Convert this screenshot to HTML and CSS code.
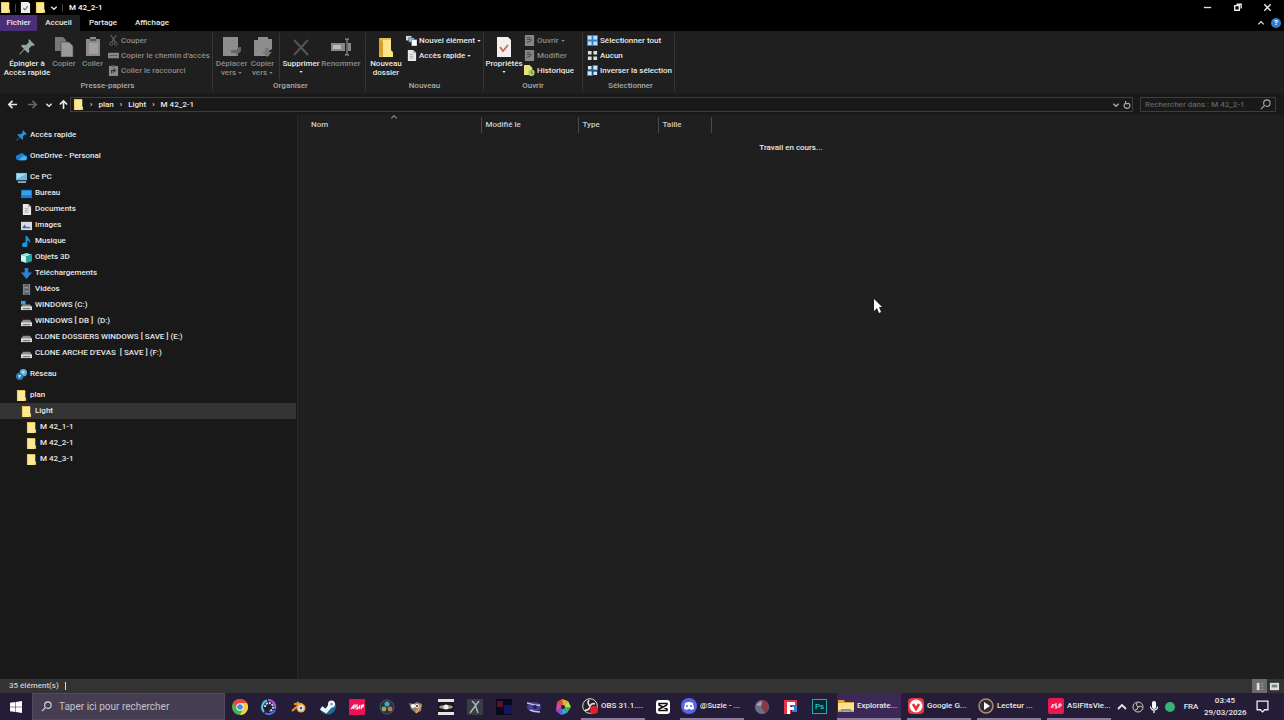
FILE: index.html
```
<!DOCTYPE html>
<html lang="fr">
<head>
  <meta charset="UTF-8" />
  <meta name="viewport" content="width=device-width, initial-scale=1.0" />
  <title>M 42_2-1</title>
  <link rel="stylesheet" href="styles.css">
</head>
<body>
  <!-- Iconos compartidos -->
  <svg class="sprite" aria-hidden="true">
    <symbol id="i-folder" viewBox="0 0 12 12"><path fill="#e8c64f" d="M1 0h9v12H1z"/><path fill="#fbe895" d="M2 1h8v7l1 1v3H2z"/><path fill="#e2b93c" d="M10 9l1 3H9z"/></symbol>
    <symbol id="i-check" viewBox="0 0 12 12"><path fill="#eee" d="M1 0h8l2 2v10H1z"/><path fill="none" stroke="#777" stroke-width="1.3" d="M3.5 6.5l2 2 3-4"/></symbol>
    <symbol id="i-pin" viewBox="0 0 16 16"><path fill="currentColor" d="M10 0l6 6-2 1-1-.5-3 3 .3 3.5L9 14 5.500 10.700 1 15.500.3 15 5 10 2 7l1.200-1.300L7 6l3-3-.7-1.500z"/></symbol>
    <symbol id="i-copy" viewBox="0 0 18 20"><path fill="#777" d="M0 0h8l3 3v11H0z"/><path fill="#9a9a9a" stroke="#4c4c4c" stroke-width=".7" d="M6 5h8l4 4v11H6z"/></symbol>
    <symbol id="i-paste" viewBox="0 0 16 20"><path fill="#8b8b8b" d="M1 2h4V0h6v2h4v17H1z"/><path fill="#555" d="M5 2h6v2H5z"/><path fill="#a0a0a0" d="M4 6h9v11H4z"/></symbol>
    <symbol id="i-cut" viewBox="0 0 12 12"><path fill="none" stroke="#666" stroke-width="1.200" d="M3 0l5 8M9 0L4 8"/><circle cx="3.500" cy="9.500" r="1.700" fill="none" stroke="#666"/><circle cx="8.500" cy="9.500" r="1.700" fill="none" stroke="#666"/></symbol>
    <symbol id="i-path" viewBox="0 0 12 12"><path fill="#888" d="M0 3h12v6H0z"/><path stroke="#444" d="M2 6h2M5 6h2M8 6h2"/></symbol>
    <symbol id="i-link" viewBox="0 0 12 12"><path fill="#888" d="M1 1h10v11H1z"/><path fill="#555" d="M4 0h4v2H4z"/><path fill="none" stroke="#333" stroke-width="1.300" d="M4 9V6h3M6 4l2 2-2 2"/></symbol>
    <symbol id="i-move" viewBox="0 0 18 20"><path fill="#8d8d8d" d="M0 0h15v19H0z"/><path fill="#666" d="M16 10h2v4l-5 5v-3H8v-3h5z"/></symbol>
    <symbol id="i-copyto" viewBox="0 0 18 20"><path fill="#8d8d8d" d="M4 0h10v2h4v10l-3 2v5H0V3h4z"/><path fill="#777" d="M11 11h4v4h3l-5 5-5-5h3z"/></symbol>
    <symbol id="i-delete" viewBox="0 0 18 20"><path fill="none" stroke="#555" stroke-width="2" d="M2 3l14 15M16 3L2 18"/></symbol>
    <symbol id="i-rename" viewBox="0 0 20 20"><path fill="#888" d="M0 6h14v8H0z"/><path fill="#bbb" d="M2 8h8v4H2z"/><path fill="none" stroke="#888" stroke-width="1.300" d="M16 3v14M14 2h1l1 1 1-1h1M14 18h1l1-1 1 1h1"/><path fill="#888" d="M17 6h3v8h-3z"/></symbol>
    <symbol id="i-newfolder" viewBox="0 0 18 20"><path fill="#e9c14d" d="M2 1h12v12l2 2v5H2z"/><path fill="#ffe389" d="M5 3h9v11l2 2v4H6z"/><path fill="#d3a127" d="M2 1l4 3v16l-4-2z"/></symbol>
    <symbol id="i-newitem" viewBox="0 0 12 12"><path fill="#cfd8dd" d="M0 1h6v5H0z"/><path fill="#8fc1e0" stroke="#333" stroke-width=".5" d="M3 3h6v5H3z"/><path fill="#fff" stroke="#555" stroke-width=".5" d="M6 5h6v7H6z"/></symbol>
    <symbol id="i-doc" viewBox="0 0 12 12"><path fill="#e8e8e8" d="M2 0h6l3 3v9H2z"/><path fill="none" stroke="#999" stroke-width=".8" d="M8 0v3h3M4 5h4M4 7h4M4 9h4"/></symbol>
    <symbol id="i-props" viewBox="0 0 18 20"><path fill="#f3f0ef" d="M2 0h11l3 3v17H2z"/><path fill="none" stroke="#d0674f" stroke-width="1.800" d="M5 10l3 4 5-6"/></symbol>
    <symbol id="i-open" viewBox="0 0 12 12"><path fill="#858585" d="M1 0h10v12H1z"/><path fill="none" stroke="#444" d="M3 3h4M3 5h4M3 8l4-1 1-3"/></symbol>
    <symbol id="i-history" viewBox="0 0 12 12"><path fill="#e6e27a" d="M0 0h6l3 3v8H0z"/><circle cx="8" cy="8.500" r="3.500" fill="#b9cf66"/><path fill="none" stroke="#4f7a38" d="M8 6v3h2"/></symbol>
    <symbol id="i-selall" viewBox="0 0 12 12"><path fill="#2d83c9" d="M0 0h12v12H0z"/><path fill="#bfe2fb" d="M1 1h4v4H1zM7 1h4v4H7zM1 7h4v4H1zM7 7h4v4H7z"/></symbol>
    <symbol id="i-selnone" viewBox="0 0 12 12"><path fill="#ddd" d="M1 1h4v4H1zM7 1h4v4H7zM1 7h4v4H1zM7 7h4v4H7z"/></symbol>
    <symbol id="i-selinv" viewBox="0 0 12 12"><path fill="#2d83c9" d="M6 0h6v6H6zM0 6h6v6H0z"/><path fill="#cfe8fa" d="M1 1h4v4H1zM7 1h4v4H7zM1 7h4v4H1zM7 7h4v4H7z"/></symbol>
    <symbol id="i-left" viewBox="0 0 12 12"><path fill="none" stroke="currentColor" stroke-width="1.800" d="M11 6H2M6 2L2 6l4 4"/></symbol>
    <symbol id="i-down" viewBox="0 0 12 12"><path fill="none" stroke="currentColor" stroke-width="2" d="M2 4l4 4 4-4"/></symbol>
    <symbol id="i-up" viewBox="0 0 12 12"><path fill="none" stroke="currentColor" stroke-width="1.800" d="M2 8l4-4 4 4"/></symbol>
    <symbol id="i-caret" viewBox="0 0 12 12"><path fill="currentColor" d="M1 3h10L6 9z"/></symbol>
    <symbol id="i-search" viewBox="0 0 12 12"><circle cx="7.500" cy="4.500" r="3.500" fill="none" stroke="currentColor" stroke-width="1.200"/><path stroke="currentColor" stroke-width="1.200" d="M5 7L1 11"/></symbol>
    <symbol id="i-cloud" viewBox="0 0 12 12"><path fill="#1683d8" d="M3 10a3 3 0 0 1 0-6 4 4 0 0 1 7 1 2.500 2.500 0 0 1 0 5z"/><path fill="#4bb3f2" d="M3 10l5-4.500 3 .5a2.500 2.500 0 0 1-1 4z"/></symbol>
    <symbol id="i-pc" viewBox="0 0 12 12"><path fill="#6eb7e0" d="M0 1h12v8H0z"/><path fill="#a6dcf6" d="M1 2h10L1 8z"/><path fill="#9aa8b0" d="M2 10h9v2H2z"/></symbol>
    <symbol id="i-desk" viewBox="0 0 12 12"><path fill="#1479cf" d="M0 2h12v9H0z"/><path fill="#32a0ee" d="M1 3h10v5H1z"/></symbol>
    <symbol id="i-img" viewBox="0 0 12 12"><path fill="#d5dae6" d="M0 2h12v9H0z"/><path fill="#4a6a91" d="M1 9l3-4 2 3 2-1 3 2z"/></symbol>
    <symbol id="i-music" viewBox="0 0 12 12"><path fill="#1b96dd" d="M5 0h2c0 3 4 3 3 8-1-2-1-3-3-3v4a3 3 0 1 1-2-2z"/></symbol>
    <symbol id="i-cube" viewBox="0 0 12 12"><path fill="#8ff0ea" d="M0 3l6-2 6 2-6 2z"/><path fill="#c8f6f2" d="M0 3l6 2v7l-6-2z"/><path fill="#21a9a6" d="M12 3L6 5v7l6-2z"/></symbol>
    <symbol id="i-dl" viewBox="0 0 12 12"><path fill="#2c83d6" d="M4 0h4v5h4l-6 7-6-7h4z"/></symbol>
    <symbol id="i-video" viewBox="0 0 12 12"><path fill="#5d6270" d="M2 0h8v12H2z"/><path stroke="#b8bdc8" stroke-dasharray="1 1" d="M3 0v12M9 0v12"/><path stroke="#aaa" d="M4 4h4M4 8h4"/></symbol>
    <symbol id="i-drive" viewBox="0 0 12 12"><path fill="#8d8d8d" d="M2 4h8l2 4H0z"/><path fill="#ddd" d="M0 7h12v4H0z"/><path stroke="#555" d="M2 9.500h8"/></symbol>
    <symbol id="i-sys" viewBox="0 0 12 12"><path fill="#28a8ea" d="M0 1h5v4H0z"/><path fill="#8d8d8d" d="M2 5h8l2 3H0z"/><path fill="#ddd" d="M0 7h12v4H0z"/><path stroke="#555" d="M2 9.500h8"/></symbol>
    <symbol id="i-net" viewBox="0 0 12 12"><circle cx="8" cy="4" r="4" fill="#5eb0e0"/><circle cx="4" cy="8" r="4" fill="#2c7cb8"/><path fill="#b4e0f7" d="M6 2l4 1-3 3zM2 7l4-1-2 4z"/></symbol>
  </svg>

  <header class="titlebar">
    <svg class="icon"><use href="#i-folder"/></svg>
    <span class="bar"></span>
    <svg class="icon"><use href="#i-check"/></svg>
    <svg class="icon"><use href="#i-folder"/></svg>
    <svg class="icon small"><use href="#i-down"/></svg>
    <span class="bar"></span>
    <h1>M 42_2-1</h1>
    <div class="window-buttons">
      <button aria-label="Réduire"><svg class="icon" viewBox="0 0 12 12"><path stroke="#ddd" stroke-width="1.500" d="M2 6h8"/></svg></button>
      <button aria-label="Restaurer"><svg class="icon" viewBox="0 0 12 12"><path fill="none" stroke="#eee" stroke-width="1.500" d="M3 4h5v5H3zM5 2.500h5V7"/></svg></button>
      <button aria-label="Fermer"><svg class="icon" viewBox="0 0 12 12"><path stroke="#eee" stroke-width="1.500" d="M2.500 2.500l7 7M9.500 2.500l-7 7"/></svg></button>
    </div>
  </header>

  <nav class="tabs">
    <button class="tab file">Fichier</button>
    <button class="tab active">Accueil</button>
    <button class="tab">Partage</button>
    <button class="tab last">Affichage</button>
    <div class="tabs-end">
      <button aria-label="Réduire le ruban"><svg class="icon small"><use href="#i-up"/></svg></button>
      <button class="help" aria-label="Aide">?</button>
    </div>
  </nav>

  <section class="ribbon">
    <div class="group clipboard">
      <div class="tools">
        <button class="big wide"><svg class="big-icon pin"><use href="#i-pin"/></svg>Épingler à<br>Accès rapide</button>
        <button class="big narrow off"><svg class="big-icon"><use href="#i-copy"/></svg>Copier</button>
        <button class="big off"><svg class="big-icon"><use href="#i-paste"/></svg>Coller</button>
        <div class="list">
          <button class="off"><svg class="icon"><use href="#i-cut"/></svg>Couper</button>
          <button class="off"><svg class="icon"><use href="#i-path"/></svg>Copier le chemin d'accès</button>
          <button class="off"><svg class="icon"><use href="#i-link"/></svg>Coller le raccourci</button>
        </div>
      </div>
      <p>Presse-papiers</p>
    </div>
    <div class="group organize">
      <div class="tools">
        <button class="big off"><svg class="big-icon"><use href="#i-move"/></svg>Déplacer<span>vers <svg class="caret"><use href="#i-caret"/></svg></span></button>
        <button class="big off"><svg class="big-icon"><use href="#i-copyto"/></svg>Copier<span>vers <svg class="caret"><use href="#i-caret"/></svg></span></button>
        <span class="separator"></span>
        <button class="big medium"><svg class="big-icon"><use href="#i-delete"/></svg>Supprimer<svg class="caret"><use href="#i-caret"/></svg></button>
        <button class="big medium off"><svg class="big-icon"><use href="#i-rename"/></svg>Renommer</button>
      </div>
      <p>Organiser</p>
    </div>
    <div class="group new">
      <div class="tools">
        <button class="big medium"><svg class="big-icon"><use href="#i-newfolder"/></svg>Nouveau<br>dossier</button>
        <div class="list">
          <button><svg class="icon"><use href="#i-newitem"/></svg>Nouvel élément<svg class="caret"><use href="#i-caret"/></svg></button>
          <button><svg class="icon"><use href="#i-doc"/></svg>Accès rapide<svg class="caret"><use href="#i-caret"/></svg></button>
        </div>
      </div>
      <p>Nouveau</p>
    </div>
    <div class="group open">
      <div class="tools">
        <button class="big medium"><svg class="big-icon"><use href="#i-props"/></svg>Propriétés<svg class="caret"><use href="#i-caret"/></svg></button>
        <div class="list">
          <button class="off"><svg class="icon"><use href="#i-open"/></svg>Ouvrir<svg class="caret"><use href="#i-caret"/></svg></button>
          <button class="off"><svg class="icon"><use href="#i-open"/></svg>Modifier</button>
          <button><svg class="icon"><use href="#i-history"/></svg>Historique</button>
        </div>
      </div>
      <p>Ouvrir</p>
    </div>
    <div class="group select">
      <div class="tools">
        <div class="list">
          <button><svg class="icon"><use href="#i-selall"/></svg>Sélectionner tout</button>
          <button><svg class="icon"><use href="#i-selnone"/></svg>Aucun</button>
          <button><svg class="icon"><use href="#i-selinv"/></svg>Inverser la sélection</button>
        </div>
      </div>
      <p>Sélectionner</p>
    </div>
  </section>

  <div class="location">
    <button class="nav" aria-label="Précédent"><svg class="icon"><use href="#i-left"/></svg></button>
    <button class="nav dim" aria-label="Suivant"><svg class="icon flip"><use href="#i-left"/></svg></button>
    <button class="nav recent" aria-label="Récents"><svg class="icon small"><use href="#i-down"/></svg></button>
    <button class="nav recent" aria-label="Dossier parent"><svg class="icon turn"><use href="#i-left"/></svg></button>
    <div class="address">
      <svg class="icon"><use href="#i-folder"/></svg>
      <span>›</span><a href="#plan">plan</a>
      <span>›</span><a href="#light">Light</a>
      <span>›</span><a href="#m42">M 42_2-1</a>
      <div class="address-end">
        <svg class="icon small"><use href="#i-down"/></svg>
        <svg class="icon small" viewBox="0 0 12 12"><path fill="none" stroke="currentColor" stroke-width="1.800" d="M8 3a4.300 4.300 0 1 1-4 0M4 0v4h4"/></svg>
      </div>
    </div>
    <label class="search">
      <input type="search" placeholder="Rechercher dans : M 42_2-1" aria-label="Rechercher" />
      <svg class="icon"><use href="#i-search"/></svg>
    </label>
  </div>

  <main class="explorer">
    <aside class="tree">
      <ul>
        <li><a href="#acces"><svg class="icon pin-blue"><use href="#i-pin"/></svg>Accès rapide</a></li>
      </ul>
      <ul>
        <li><a href="#onedrive"><svg class="icon"><use href="#i-cloud"/></svg>OneDrive - Personal</a></li>
      </ul>
      <ul>
        <li><a href="#pc"><svg class="icon"><use href="#i-pc"/></svg>Ce PC</a></li>
        <li><a class="level-1" href="#bureau"><svg class="icon"><use href="#i-desk"/></svg>Bureau</a></li>
        <li><a class="level-1" href="#documents"><svg class="icon"><use href="#i-doc"/></svg>Documents</a></li>
        <li><a class="level-1" href="#images"><svg class="icon"><use href="#i-img"/></svg>Images</a></li>
        <li><a class="level-1" href="#musique"><svg class="icon"><use href="#i-music"/></svg>Musique</a></li>
        <li><a class="level-1" href="#objets"><svg class="icon"><use href="#i-cube"/></svg>Objets 3D</a></li>
        <li><a class="level-1" href="#dl"><svg class="icon"><use href="#i-dl"/></svg>Téléchargements</a></li>
        <li><a class="level-1" href="#videos"><svg class="icon"><use href="#i-video"/></svg>Vidéos</a></li>
        <li><a class="level-1" href="#c"><svg class="icon"><use href="#i-sys"/></svg>WINDOWS (C:)</a></li>
        <li><a class="level-1" href="#d"><svg class="icon"><use href="#i-drive"/></svg>WINDOWS [ DB ]&nbsp; (D:)</a></li>
        <li><a class="level-1" href="#e"><svg class="icon"><use href="#i-drive"/></svg>CLONE DOSSIERS WINDOWS [ SAVE ] (E:)</a></li>
        <li><a class="level-1" href="#f"><svg class="icon"><use href="#i-drive"/></svg>CLONE ARCHE D'EVAS&nbsp; [ SAVE ] (F:)</a></li>
      </ul>
      <ul>
        <li><a href="#reseau"><svg class="icon"><use href="#i-net"/></svg>Réseau</a></li>
      </ul>
      <ul>
        <li><a href="#plan"><svg class="icon"><use href="#i-folder"/></svg>plan</a></li>
        <li><a class="level-1 selected" href="#light"><svg class="icon"><use href="#i-folder"/></svg>Light</a></li>
        <li><a class="level-2" href="#m1"><svg class="icon"><use href="#i-folder"/></svg>M 42_1-1</a></li>
        <li><a class="level-2" href="#m2"><svg class="icon"><use href="#i-folder"/></svg>M 42_2-1</a></li>
        <li><a class="level-2" href="#m3"><svg class="icon"><use href="#i-folder"/></svg>M 42_3-1</a></li>
      </ul>
    </aside>
    <section class="files">
      <table>
        <thead>
          <tr>
            <th class="col-name">Nom<svg class="icon small sort"><use href="#i-up"/></svg></th>
            <th class="col-date">Modifié le</th>
            <th class="col-type">Type</th>
            <th class="col-size">Taille</th>
          </tr>
        </thead>
      </table>
      <p class="working">Travail en cours...</p>
    </section>
  </main>

  <div class="status">
    <span>35 élément(s)</span><i></i>
    <div class="views">
      <button class="on" aria-label="Détails"><svg class="icon" viewBox="0 0 12 12"><path fill="#ddd" d="M3 2h3v8H3z"/><path stroke="#aaa" d="M8 3h2M8 6h2M8 9h2"/></svg></button>
      <button aria-label="Grandes icônes"><svg class="icon" viewBox="0 0 12 12"><path fill="#ddd" d="M1 2h10v8H1z"/><path fill="#688" d="M3 4h6v3H3z"/></svg></button>
    </div>
  </div>

  <footer class="taskbar">
    <button class="start" aria-label="Démarrer"><svg class="icon" viewBox="0 0 12 12"><path fill="#fff" d="M0 1.700L5.500 1v4.700H0zM6 .900L12 0v5.700H6zM0 6.200h5.500V11L0 10.300zM6 6.200h6V12L6 11.100z"/></svg></button>
    <label class="task-search">
      <svg class="icon"><use href="#i-search"/></svg>
      <input type="text" placeholder="Taper ici pour rechercher" aria-label="Rechercher dans Windows" />
    </label>
    <div class="pinned">
      <button aria-label="Chrome"><svg viewBox="0 0 16 16"><circle cx="8" cy="8" r="8" fill="#4caf50"/><path fill="#e5483a" d="M1 4a8 8 0 0 1 14 0H8L5 9z"/><path fill="#f8cd3d" d="M15 4a8 8 0 0 1-7 12l4-8-4-4z"/><circle cx="8" cy="8" r="3.700" fill="#fff"/><circle cx="8" cy="8" r="2.800" fill="#4289ea"/></svg></button>
      <button aria-label="Studio"><svg viewBox="0 0 16 16" fill="none" stroke-width="2"><path stroke="#55c9e7" d="M3 13A7 7 0 0 1 6 1.500"/><path stroke="#b25bcc" d="M7 1a7 7 0 0 1 7 9"/><path stroke="#4a6fe3" d="M14 11A7 7 0 0 1 4 14"/><path stroke="#b5e4ee" stroke-dasharray="2 1" d="M4 8a4 4 0 1 1 4 4"/></svg></button>
      <button aria-label="Blender"><svg viewBox="0 0 16 16"><path fill="none" stroke="#ef922d" stroke-width="2" d="M1 12l8-7H3M6 3l5 4"/><circle cx="10" cy="9" r="4.500" fill="#f3a24a"/><circle cx="10" cy="9" r="2.700" fill="#fff"/><circle cx="10" cy="9" r="1.500" fill="#345f99"/></svg></button>
      <button aria-label="Steam"><svg viewBox="0 0 16 16"><path fill="#1d6c9c" d="M0 9a8 8 0 0 0 15 2 8 8 0 0 0 0-7z"/><path stroke="#f4f8fc" stroke-width="4" d="M1 9l5 3 5-6"/><circle cx="11.500" cy="5" r="3.500" fill="#f4f8fc"/><circle cx="11.500" cy="5" r="1.500" fill="#88a9c3"/></svg></button>
      <button aria-label="ASI"><svg viewBox="0 0 16 16"><rect width="16" height="16" rx="1" fill="#ee1154"/><path fill="none" stroke="#fff" stroke-width="1.200" d="M2 10l3-4v4M3 9h2M9 6H7L6.500 8H9L8.500 10H6.500M11 6l-1 4M12 10l1-4h1.500L14 8h-2"/></svg></button>
      <button aria-label="Resolve"><svg viewBox="0 0 16 16"><circle cx="8" cy="8" r="7" fill="#26323e" stroke="#4a5963"/><circle cx="8" cy="5" r="2.500" fill="#40a7cc"/><circle cx="5" cy="10" r="2.400" fill="#8fae58"/><circle cx="11" cy="10" r="2.400" fill="#c27a46"/></svg></button>
      <button aria-label="GIMP"><svg viewBox="0 0 16 16"><path fill="#8b8378" d="M1 4l4 1 4-2 5 2-1 7-5 2-5-4z"/><circle cx="5" cy="7" r="2" fill="#fff"/><circle cx="9" cy="7" r="2" fill="#fff"/><circle cx="9" cy="7" r="1" fill="#222"/><path stroke="#e4a14c" stroke-width="2" d="M8 14l5-8"/></svg></button>
      <button aria-label="Siril"><svg viewBox="0 0 16 16"><path fill="#e4e4e4" d="M0 0h16v3H0zM0 13h16v3H0z"/><path fill="#181818" d="M0 3h16v10H0z"/><ellipse cx="8" cy="8" rx="7" ry="2" fill="#999"/><circle cx="8" cy="8" r="2.500" fill="#eee"/></svg></button>
      <button aria-label="Lunette"><svg viewBox="0 0 16 16"><path fill="#393d42" d="M0 0h16v16H0z"/><path fill="none" stroke="#a7b4b7" stroke-width="1.500" d="M3 14L12 2M5 2l3 3 3 9"/></svg></button>
      <button aria-label="Capture"><svg viewBox="0 0 16 16"><path fill="#08081d" d="M0 0h16v16H0z"/><path fill="#5d102b" d="M1 2h6v6H1z"/><path fill="#151660" d="M8 6h8v9H8z"/></svg></button>
      <button aria-label="Stellarium"><svg viewBox="0 0 16 16"><ellipse cx="8" cy="8" rx="7" ry="5" fill="#4c3f92"/><path fill="none" stroke="#bfc2ef" stroke-width="1.500" d="M1 4c4 0 5 3 13 2M4 11c4 2 7 2 10 2"/><circle cx="9" cy="8" r="2" fill="#24214f"/></svg></button>
      <button aria-label="Photos"><svg viewBox="0 0 16 16"><path fill="#e94d38" d="M8 8L2 3l5-3z"/><path fill="#f4ad36" d="M8 8L7 0l6 2z"/><path fill="#bade43" d="M8 8l5-6 3 6z"/><path fill="#39b85f" d="M8 8h8l-4 6z"/><path fill="#33a6e2" d="M8 8l4 6-6 2z"/><path fill="#7455d5" d="M8 8l-2 8-5-4z"/><path fill="#de45a0" d="M8 8l-7 4 1-9z"/><circle cx="8" cy="8" r="2" fill="#27203a"/></svg></button>
    </div>
    <button class="app"><svg viewBox="0 0 16 16"><circle cx="8" cy="8" r="7.300" fill="#222" stroke="#ddd"/><path fill="none" stroke="#ddd" stroke-width="1.700" d="M7 2a4 4 0 0 0 1 6 4 4 0 0 1-5 4M8 8a4 4 0 0 1 5-2"/><circle cx="12" cy="12" r="4" fill="#e51f2b"/></svg><span>OBS 31.1....</span></button>
    <button class="solo" aria-label="CapCut"><svg viewBox="0 0 16 16"><rect x="1" y="1" width="14" height="14" rx="3" fill="#fff"/><path fill="none" stroke="#111" stroke-width="1.500" d="M12 6V4.500H4V6l8 4v1.500H4V10l8-4"/></svg></button>
    <button class="app"><svg viewBox="0 0 16 16"><circle cx="8" cy="8" r="8" fill="#5865e9"/><path fill="#fff" d="M4 5l3-1h2l3 1 1 6-3 1-1-1H7l-1 1-3-1z"/><circle cx="6" cy="8" r="1" fill="#5865e9"/><circle cx="10" cy="8" r="1" fill="#5865e9"/></svg><span>@Suzie - ...</span></button>
    <button class="solo" aria-label="Sphère"><svg viewBox="0 0 16 16"><circle cx="8" cy="8" r="7" fill="#69708a"/><path fill="#8d3848" d="M8 1a7 7 0 0 1 3 13L7 8z"/><path fill="#a6aab5" d="M2 6l6-4-1 5z"/></svg></button>
    <button class="solo" aria-label="Fusion"><svg viewBox="0 0 16 16"><path fill="#e3344b" d="M1 1h13v6H8v8H1z"/><path fill="#3183d5" d="M9 7h5v6H9z"/><path fill="#fff" d="M4 3h8v3H7v2h4v3H7v4H4z"/></svg></button>
    <button class="solo ps" aria-label="Photoshop"><span>Ps</span></button>
    <button class="app current"><svg viewBox="0 0 16 16"><path fill="#dba93e" d="M0 2h6l1 2h9v10H0z"/><path fill="#ffe08a" d="M0 5h16v7H0z"/><path fill="#7e9aa0" d="M3 11h10v3h-2v-1H5v1H3z"/></svg><span>Explorate...</span></button>
    <button class="app"><svg viewBox="0 0 16 16"><rect width="16" height="16" rx="4" fill="#e93842"/><circle cx="8" cy="8" r="6.500" fill="#fff"/><path fill="none" stroke="#e32e3b" stroke-width="2.500" d="M5 6l3 5 3-5"/></svg><span>Google G...</span></button>
    <button class="app"><svg viewBox="0 0 16 16"><circle cx="8" cy="8" r="7" fill="#332c36" stroke="#ac8d6e" stroke-width="1.500"/><path fill="#fff" d="M6 4l6 4-6 4z"/></svg><span>Lecteur ...</span></button>
    <button class="app"><svg viewBox="0 0 16 16"><rect width="16" height="16" rx="2" fill="#e8174f"/><path fill="none" stroke="#fff" d="M3 10l2-4v4M9 6H7v2h2v2H7M11 10V6h2v2h-2"/></svg><span>ASIFitsVie...</span></button>
    <div class="tray">
      <button aria-label="Icônes cachées"><svg class="icon"><use href="#i-up"/></svg></button>
      <button aria-label="OBS"><svg class="icon" viewBox="0 0 12 12"><circle cx="6" cy="6" r="5" fill="#222" stroke="#ccc"/><path fill="none" stroke="#ccc" d="M5 2a3 3 0 0 0 1 4 3 3 0 0 1-3 3M6 6a3 3 0 0 1 4 0"/></svg></button>
      <button aria-label="Micro"><svg class="icon" viewBox="0 0 12 12"><rect x="4" y="0" width="4" height="8" rx="2" fill="#fff"/><path fill="none" stroke="#fff" stroke-width="1.200" d="M2.500 5.500a3.500 3.500 0 0 0 7 0M6 9v3"/></svg></button>
      <button aria-label="En ligne"><svg class="icon" viewBox="0 0 12 12"><circle cx="6" cy="6" r="5" fill="#35b374"/></svg></button>
    </div>
    <button class="lang">FRA</button>
    <div class="clock">03:45<br>29/03/2026</div>
    <button class="notify" aria-label="Notifications"><svg viewBox="0 0 12 12"><path fill="none" stroke="#eee" stroke-width="1.200" d="M1 1h10v8H8l-2 2-2-2H1z"/></svg></button>
  </footer>

  <svg class="cursor" viewBox="0 0 8 14" aria-hidden="true"><path fill="#fff" d="M0 0l8 8H5l2 5-2 1-2-5-3 3z"/></svg>
</body>
</html>
```

FILE: styles.css
```
* {
  box-sizing: border-box;
}
body {
  margin: 0;
  min-height: 100vh;
  display: flex;
  flex-direction: column;
  background: #1f1f1f;
  color: #e8e8e8;
  font: 500 8px/10px Roboto, "Open Sans", sans-serif;
  white-space: nowrap;
}
button, input {
  font: inherit;
  color: inherit;
  background: none;
  border: 0;
  padding: 0;
  margin: 0;
}
a {
  color: inherit;
  text-decoration: none;
}
h1, p, ul {
  margin: 0;
  padding: 0;
  font: inherit;
  list-style: none;
}
svg {
  display: block;
  flex: none;
}
.sprite {
  position: absolute;
  width: 0;
  height: 0;
}
.icon {
  width: 11px;
  height: 11px;
}
.icon.small {
  width: 8px;
  height: 8px;
}
.caret {
  display: inline-block;
  width: 4px;
  height: 4px;
}

/* Barra de título */
.titlebar {
  display: flex;
  align-items: center;
  gap: 4px;
  height: 15px;
  background: #000;
}
.titlebar h1 {
  color: #fff;
}
.bar {
  width: 1px;
  height: 8px;
  background: #444;
}
.bar + h1 {
  margin-left: 2px;
}
.window-buttons {
  display: flex;
  margin-left: auto;
  padding-right: 2px;
}
.window-buttons button {
  display: flex;
  justify-content: center;
  width: 30px;
}

/* Pestañas */
.tabs {
  display: flex;
  height: 16px;
  background: #000;
}
.tab {
  width: 46px;
}
.tab.file {
  width: 37px;
  background: #4b2e78;
}
.tab.active {
  width: 43px;
  background: #1f1f1f;
}
.tab.last {
  width: 52px;
}
.tabs-end {
  display: flex;
  align-items: center;
  gap: 6px;
  margin-left: auto;
  padding-right: 3px;
}
.help {
  width: 10px;
  height: 10px;
  border-radius: 50%;
  background: #2f7fd0;
  color: #fff;
  font-weight: bold;
}

/* Cinta */
.ribbon {
  display: flex;
  height: 63px;
  padding-top: 2px;
  background: #1f1f1f;
}
.group {
  display: flex;
  flex-direction: column;
  border-right: 1px solid #353535;
  height: 58px;
}
.group > p {
  text-align: center;
  color: #aaa;
}
.clipboard {
  width: 213px;
  padding-left: 3px;
}
.organize {
  width: 153px;
  padding-left: 3px;
}
.new {
  width: 118px;
}
.open {
  width: 99px;
}
.select {
  width: 92px;
  padding-left: 4px;
}
.tools {
  display: flex;
  height: 48px;
}
.big {
  display: flex;
  flex-direction: column;
  align-items: center;
  width: 31px;
  line-height: 9px;
  padding-top: 4px;
}
.big.wide {
  width: 48px;
}
.big.medium {
  width: 40px;
}
.big.narrow {
  width: 26px;
}
.big-icon {
  width: 20px;
  height: 20px;
  margin-bottom: 2px;
}
.pin {
  color: #93a3a8;
  padding: 2px;
}
.off {
  color: #8c8c8c;
}
.separator {
  width: 1px;
  margin: 0 1px;
  background: #353535;
}
.big > .caret {
  margin-top: 2px;
}
.list button {
  display: flex;
  align-items: center;
  gap: 2px;
  height: 15px;
}

/* Barra de dirección */
.location {
  display: flex;
  align-items: center;
  height: 21px;
  padding: 0 8px 0 2px;
  background: #191919;
}
.nav {
  display: flex;
  justify-content: center;
  width: 20px;
}
.nav.recent {
  width: 14px;
}
.nav.dim {
  color: #666;
}
.flip {
  transform: rotate(180deg);
}
.turn {
  transform: rotate(90deg);
}
.address {
  flex: 1;
  display: flex;
  align-items: center;
  gap: 6px;
  height: 15px;
  margin-right: 7px;
  padding-left: 2px;
  border: 1px solid #3d3d3d;
}
.address-end {
  display: flex;
  gap: 3px;
  margin-left: auto;
  padding-right: 1px;
  color: #aaa;
}
.search {
  display: flex;
  align-items: center;
  width: 136px;
  height: 15px;
  padding: 0 4px;
  border: 1px solid #3d3d3d;
  color: #aaa;
}
.search input {
  flex: 1;
  min-width: 0;
}
.search input::placeholder {
  color: #626262;
}

/* Explorador */
.explorer {
  flex: 1;
  display: flex;
}
.tree {
  width: 298px;
  padding-top: 12px;
  background: #191919;
  border-right: 1px solid #292929;
}
.tree ul {
  margin-bottom: 5px;
}
.tree a {
  display: flex;
  align-items: center;
  gap: 3px;
  height: 16px;
  padding-left: 16px;
  margin-right: 1px;
}
.tree .level-1 {
  padding-left: 21px;
}
.tree .level-2 {
  padding-left: 26px;
}
.tree .selected {
  background: #333;
}
.pin-blue {
  color: #2b91cf;
}
.files {
  flex: 1;
  padding-top: 2px;
}
.files table {
  border-collapse: collapse;
  table-layout: fixed;
  width: 414px;
}
.files th {
  height: 16px;
  padding: 0 0 0 4px;
  border-right: 1px solid #4a4a4a;
  color: #ccc;
  font-weight: inherit;
  text-align: left;
}
.files .col-name {
  position: relative;
  width: 183px;
  padding-left: 13px;
}
.sort {
  position: absolute;
  top: -4px;
  left: 92px;
  color: #888;
}
.col-date {
  width: 97px;
}
.col-type {
  width: 80px;
}
.working {
  margin-top: 10px;
  text-align: center;
}

/* Barra de estado */
.status {
  display: flex;
  align-items: center;
  gap: 6px;
  height: 14px;
  padding-left: 9px;
  background: #333;
  color: #ccc;
}
.status i {
  width: 1px;
  height: 8px;
  background: #ddd;
}
.views {
  display: flex;
  margin-left: auto;
  padding-right: 2px;
}
.views button {
  display: flex;
  align-items: center;
  justify-content: center;
  width: 15px;
  height: 14px;
}
.views .on {
  background: #6b6b6b;
}

/* Barra de tareas */
.taskbar {
  display: flex;
  align-items: stretch;
  height: 27px;
  background: #251d38;
}
.taskbar button {
  display: flex;
  align-items: center;
  justify-content: center;
}
.taskbar button > svg {
  width: 16px;
  height: 16px;
}
.taskbar .start {
  width: 32px;
}
.taskbar .start .icon {
  width: 12px;
  height: 12px;
}
.task-search {
  display: flex;
  align-items: center;
  gap: 7px;
  width: 193px;
  padding-left: 8px;
  background: #453e53;
  border: 1px solid #514a5e;
  color: #ddd;
  font-size: 10px;
  font-weight: 400;
}
.task-search input {
  flex: 1;
  min-width: 0;
}
.task-search input::placeholder {
  color: #c4c0cb;
}
.pinned {
  display: grid;
  grid-template-columns: repeat(12, 1fr);
  width: 353px;
}
.solo {
  width: 29px;
}
.ps span {
  width: 15px;
  height: 15px;
  border: 1px solid #27a9b5;
  background: #06282f;
  color: #2bc5d0;
  line-height: 13px;
}
.taskbar .app {
  justify-content: flex-start;
  gap: 3px;
  width: 64px;
  margin: 0 3px;
  padding-left: 1px;
  border-bottom: 2px solid #8b7d9f;
}
.taskbar .current {
  background: #3b2857;
}
.tray {
  display: flex;
  margin-left: auto;
}
.tray button {
  width: 16px;
}
.taskbar .tray .icon {
  width: 12px;
  height: 12px;
}
.lang {
  width: 26px;
}
.clock {
  width: 42px;
  align-self: center;
  text-align: center;
  line-height: 12px;
}
.notify {
  width: 38px;
  padding-right: 6px;
}
.taskbar .notify svg {
  width: 13px;
  height: 13px;
}

/* Puntero del ratón */
.cursor {
  position: absolute;
  left: 874px;
  top: 299px;
  width: 8px;
  height: 14px;
}
```
